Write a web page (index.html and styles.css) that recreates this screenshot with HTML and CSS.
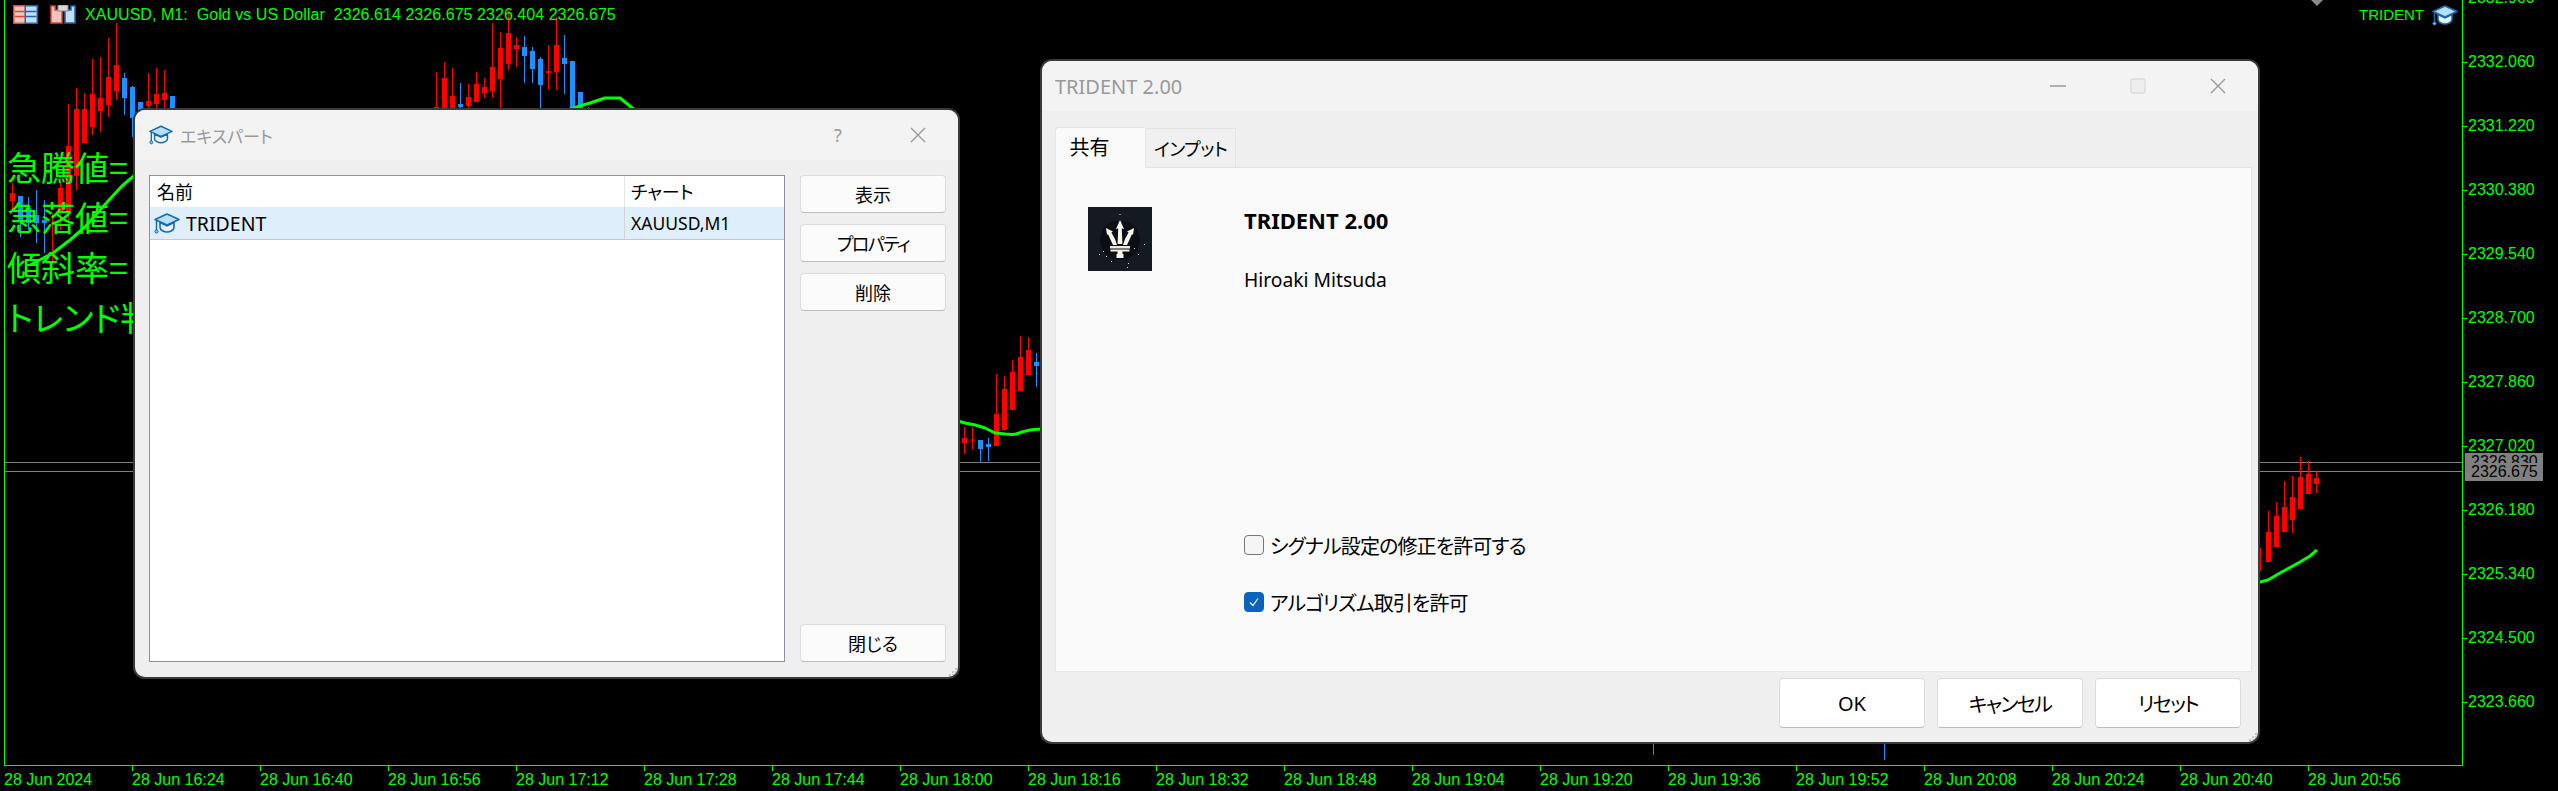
FILE: index.html
```html
<!DOCTYPE html>
<html lang="ja">
<head>
<meta charset="utf-8">
<title>TRIDENT 2.00</title>
<link rel="stylesheet" href="styles.css">
</head>
<body>
<svg class="defs" width="0" height="0" aria-hidden="true">
  <symbol id="cap" viewBox="0 0 26 21">
    <path d="M6 9.5V14.5C6 17 10 19 13 19C16 19 20 17 20 14.5V9.5L13 12.8Z" fill="#e6f3fc" stroke="#1a6aae" stroke-width="1.6"/>
    <path d="M13 1L25 6.5L13 12L1 6.5Z" fill="#b9e0fa" stroke="#1a6aae" stroke-width="1.6" stroke-linejoin="round"/>
    <path d="M2.5 7V17" stroke="#1a6aae" stroke-width="1.5" fill="none"/>
    <circle cx="2.5" cy="18.5" r="1.6" fill="#8cc6ee" stroke="#1a6aae"/>
  </symbol>
  <symbol id="grip" viewBox="0 0 10 10">
    <path d="M7 1h2v2H7zM4 4h2v2H4zM7 4h2v2H7zM1 7h2v2H1zM4 7h2v2H4zM7 7h2v2H7z" fill="#c4c4c4"/>
  </symbol>
</svg>

<main class="chart">
  <section class="plot">
    <svg class="candles" viewBox="0 0 2457 765" width="2457" height="765" aria-hidden="true">
      <g transform="translate(-5 0)">
        <path class="level" d="M5 462.5H2462M5 471.5H2462"/>
        <path class="wick red" d="M12.5 183V212M52.5 213V267M60.5 177V230M68.5 104V220M76.5 88V190M84.5 93V143M92.5 59V135M100.5 57V132M108.5 38V117M116.5 23V100M148.5 73V110M156.5 68V110M164.5 70V110
        M436.5 72V110M444.5 62V110M452.5 68V110M468.5 84V110M476.5 72V102M484.5 78V98M492.5 23V98M500.5 32V110M508.5 8V70M516.5 37V67M548.5 45V90M556.5 17V90
        M964.5 427V454M972.5 427V449M996.5 374V446M1004.5 376V430M1012.5 360V410M1020.5 336V391M1028.5 337V375
        M2260.5 548V571M2268.5 511V562M2276.5 502V547M2284.5 481V532M2292.5 476V533M2300.5 457V509M2308.5 461V494M2316.5 471V493"/>
        <path class="wick blue" d="M20.5 196V237M28.5 197V230M36.5 190V243M44.5 200V253M124.5 73V115M132.5 86V137
        M460.5 83V110M524.5 36V83M532.5 47V83M540.5 57V110M564.5 35V94M588.5 107V110
        M980.5 440V462M988.5 438V461M1036.5 353V387M1653.5 743V755M1884.5 743V760"/>
        <path class="body red" d="M12.5 193V201M60.5 188V213M68.5 146V213M76.5 109V176M84.5 109V143M92.5 94V127M100.5 98V111M108.5 77V105M116.5 65V91M148.5 101V106M156.5 94V104M164.5 93V100
        M436.5 107V110M444.5 78V110M452.5 96V110M468.5 97V106M476.5 84V102M484.5 87V93M492.5 67V91M500.5 48V79M508.5 33V64M516.5 45V49M548.5 71V73M556.5 45V72
        M964.5 438V443M972.5 439.5V440.5M996.5 414V446M1004.5 389V430M1012.5 372V410M1020.5 357V391M1028.5 350V375
        M2268.5 532V562M2276.5 516V547M2284.5 507V532M2292.5 497V520M2300.5 477V509M2308.5 474V494M2316.5 478V484"/>
        <path class="body blue" d="M20.5 196V220M28.5 208V223M36.5 215V223M44.5 220V223M124.5 78V98M132.5 87V118M140.5 102V110M172.5 96V110
        M460.5 104V107M524.5 47V56M532.5 51V69M540.5 59V85M564.5 58V64M572.5 61V110M580.5 92V110
        M980.5 440V449M988.5 444V447M1036.5 362V366"/>
        <path class="ma" d="M30 265L53 253L70 240L85 227L100 210L109 200L122 186L136 174"/>
        <path class="ma" d="M570 109L590 103L605 98L620 98L636 111"/>
        <path class="ma" d="M958 421L965 423L975 425L985 428L995 433L1005 434L1012 434.5L1016 434L1022 432L1030 430L1041 429"/>
        <path class="ma" d="M2258 582.5L2268 580L2280 573L2300 562L2310 556L2317 550"/>
        <path class="marker" d="M2311 0H2323L2317 6Z"/>
      </g>
    </svg>

    <header class="symbol-bar">
      <svg class="tool-icon" viewBox="0 0 25 19" width="25" height="19" aria-hidden="true">
        <rect x=".75" y=".75" width="12" height="17.5" fill="#f6c4bf" stroke="#e0463c" stroke-width="1.5"/>
        <rect x="12.25" y=".75" width="12" height="17.5" fill="#bfe0f8" stroke="#1a6aae" stroke-width="1.5"/>
        <path d="M2 6.5H12M2 11.5H12" stroke="#e0463c" stroke-width="1.6"/>
        <path d="M13 6.5H23.5M13 11.5H23.5" stroke="#1a6aae" stroke-width="1.6"/>
      </svg>
      <svg class="tool-icon" viewBox="0 0 26 19" width="26" height="19" aria-hidden="true">
        <path d="M1 1H5V5H12V18H1Z" fill="#f6c4bf" stroke="#e0463c" stroke-width="1.5"/>
        <path d="M25 1H21V5H15V18H25Z" fill="#bfe0f8" stroke="#1a6aae" stroke-width="1.5"/>
        <rect x="8" y="0" width="10" height="6" fill="#d8d8d8" stroke="#8a8a8a"/>
      </svg>
      <span class="symbol-text">XAUUSD, M1:&nbsp; Gold vs US Dollar&nbsp; 2326.614 2326.675 2326.404 2326.675</span>
    </header>

    <div class="ea-label">
      <span>TRIDENT</span>
      <svg width="26" height="21" aria-hidden="true"><use href="#cap"/></svg>
    </div>

    <ul class="indicator">
      <li>急騰値=</li>
      <li>急落値=</li>
      <li>傾斜率=</li>
      <li>トレンド判定</li>
    </ul>
  </section>

  <aside class="price-axis">
    <span>2332.900</span><span>2332.060</span><span>2331.220</span><span>2330.380</span>
    <span>2329.540</span><span>2328.700</span><span>2327.860</span><span>2327.020</span>
    <span>2326.180</span><span>2325.340</span><span>2324.500</span><span>2323.660</span>
  </aside>

  <footer class="time-axis">
    <span class="first">28 Jun 2024</span><span>28 Jun 16:24</span><span>28 Jun 16:40</span><span>28 Jun 16:56</span>
    <span>28 Jun 17:12</span><span>28 Jun 17:28</span><span>28 Jun 17:44</span><span>28 Jun 18:00</span>
    <span>28 Jun 18:16</span><span>28 Jun 18:32</span><span>28 Jun 18:48</span><span>28 Jun 19:04</span>
    <span>28 Jun 19:20</span><span>28 Jun 19:36</span><span>28 Jun 19:52</span><span>28 Jun 20:08</span>
    <span>28 Jun 20:24</span><span>28 Jun 20:40</span><span>28 Jun 20:56</span>
  </footer>

  <div class="price-tag">
    <span class="tag-back">2326.830</span>
    <span class="tag-front">2326.675</span>
  </div>
</main>

<section class="window experts">
  <div class="titlebar">
    <svg class="title-icon" width="24" height="20" aria-hidden="true"><use href="#cap"/></svg>
    <span class="title-text jp">エキスパート</span>
    <span class="ctl help">?</span>
    <span class="ctl"><svg width="16" height="16" viewBox="0 0 16 16" aria-hidden="true"><path class="ctl-stroke" d="M1 1L15 15M15 1L1 15"/></svg></span>
  </div>
  <div class="experts-body">
    <div class="list">
      <div class="list-head">
        <span class="col-name jp">名前</span>
        <span class="col-chart jp">チャート</span>
      </div>
      <div class="list-row">
        <span class="col-name row-name">
          <svg width="26" height="21" aria-hidden="true"><use href="#cap"/></svg>
          <span>TRIDENT</span>
        </span>
        <span class="col-chart row-chart">XAUUSD,M1</span>
      </div>
    </div>
    <div class="side-buttons">
      <button class="btn jp">表示</button>
      <button class="btn jp kana">プロパティ</button>
      <button class="btn jp">削除</button>
      <button class="btn jp push">閉じる</button>
    </div>
  </div>
  <svg class="grip" width="10" height="10" aria-hidden="true"><use href="#grip"/></svg>
</section>

<section class="window props">
  <div class="titlebar">
    <span class="title-text props-title">TRIDENT 2.00</span>
    <span class="ctl"><svg width="16" height="16" viewBox="0 0 16 16" aria-hidden="true"><path class="ctl-stroke" d="M0 8H16"/></svg></span>
    <span class="ctl"><svg width="16" height="16" viewBox="0 0 16 16" aria-hidden="true"><rect class="ctl-off" x="1" y="1" width="14" height="14" rx="2"/></svg></span>
    <span class="ctl"><svg width="16" height="16" viewBox="0 0 16 16" aria-hidden="true"><path class="ctl-stroke" d="M1 1L15 15M15 1L1 15"/></svg></span>
  </div>
  <div class="props-body">
    <div class="tabs">
      <span class="tab active jp">共有</span>
      <span class="tab tab-kana jp">インプット</span>
    </div>
    <div class="panel">
      <div class="about">
        <svg class="logo" viewBox="0 0 64 64" width="64" height="64" aria-hidden="true">
          <rect width="64" height="64" fill="#141a22"/>
          <circle cx="32" cy="33" r="20" fill="#0b0e13"/>
          <path fill="#f7f5f0" d="M32 13L36 22L33.8 21.4L34.4 37H29.6L30.2 21.4L28 22Z"/>
          <path fill="#f7f5f0" d="M18 21L25 24.5L23.4 25.6L27 32L29 38H25L22.2 32L20 27L19 28Z"/>
          <path fill="#f7f5f0" d="M46 21L39 24.5L40.6 25.6L37 32L35 38H39L41.8 32L44 27L45 28Z"/>
          <path fill="#efe9df" d="M22 39H42V41.4H22ZM22.5 42.6H41.5V44.4H22.5Z"/>
          <path fill="#f7f5f0" d="M29.5 44H34.5V47H35.5V51H28.5V47H29.5Z"/>
          <path fill="#cfd8dc" d="M31.5 7h1v1h-1zM15 44h1v1h-1zM11 47h1v1h-1zM18 49h1v1h-1zM23 54h1v1h-1zM40 56h1v1h-1zM50 47h1v1h-1zM46 41h1v1h-1zM56 37h1v1h-1zM39 60h1v1h-1z"/>
        </svg>
        <div class="about-text">
          <div class="product">TRIDENT 2.00</div>
          <div class="author">Hiroaki Mitsuda</div>
        </div>
      </div>
      <div class="checks">
        <label class="check jp"><span class="box"></span>シグナル設定の修正を許可する</label>
        <label class="check jp"><span class="box on"><svg width="12" height="12" viewBox="0 0 12 12" aria-hidden="true"><path d="M2 6.5L5 9.5L10 2.5" fill="none" stroke="#fff" stroke-width="1.2"/></svg></span>アルゴリズム取引を許可</label>
      </div>
    </div>
    <div class="footer-buttons">
      <button class="btn big">OK</button>
      <button class="btn big jp kana">キャンセル</button>
      <button class="btn big jp kana">リセット</button>
    </div>
  </div>
  <svg class="grip" width="10" height="10" aria-hidden="true"><use href="#grip"/></svg>
</section>
</body>
</html>
```
FILE: styles.css
```css
* { box-sizing: border-box; }
html, body { margin: 0; height: 100%; }
body {
  background: #000;
  overflow: hidden;
  font-family: "Noto Sans", "Noto Sans CJK JP", sans-serif;
  position: relative;
}
.defs { position: absolute; }
ul { list-style: none; margin: 0; padding: 0; }

/* chart */
.chart {
  display: grid;
  grid-template-columns: 2463px 1fr;
  grid-template-rows: 766px 1fr;
  height: 791px;
  overflow: hidden;
  position: relative;
  color: #0f0;
  font-family: "Liberation Sans", sans-serif;
  font-size: 16px;
}
.plot {
  position: relative;
  border-left: 1px solid #0f0;
  border-right: 1px solid #0f0;
  border-bottom: 1px solid #0f0;
  margin-left: 4px;
  overflow: hidden;
}
.candles { position: absolute; left: 0; top: 0; }
.wick, .body, .ma, .level { fill: none; }
.wick { stroke-width: 1; }
.body { stroke-width: 5; }
.red { stroke: #f00; }
.blue { stroke: #1e90ff; }
.ma { stroke: #0f0; stroke-width: 3; stroke-linejoin: round; }
.level { stroke: #808080; }
.marker { fill: #8a8a8a; }

.symbol-bar {
  position: absolute;
  left: 8px;
  top: 5px;
  display: flex;
  align-items: flex-start;
  gap: 12px;
}
.tool-icon { flex: none; }
.symbol-text { margin-left: -3px; line-height: 20px; white-space: nowrap; font-size: 16px; letter-spacing: .05px; }
.ea-label {
  position: absolute;
  right: 4px;
  top: 5px;
  display: flex;
  align-items: flex-start;
  gap: 8px;
  font-size: 15px;
  line-height: 20px;
}
.indicator {
  position: absolute;
  left: 2px;
  top: 142px;
  font-family: "Noto Sans CJK JP", sans-serif;
  font-feature-settings: "palt";
  font-size: 34px;
  line-height: 50px;
  white-space: nowrap;
}

.price-axis {
  margin-top: -34px;
  display: flex;
  flex-direction: column;
}
.price-axis span {
  height: 64px;
  flex: none;
  display: flex;
  align-items: center;
  gap: 1px;
  line-height: 1;
}
.price-axis span::before {
  content: "";
  width: 4px;
  height: 1px;
  background: #0f0;
}
.time-axis {
  grid-column: 1 / 3;
  display: flex;
  padding-left: 4px;
}
.time-axis span { width: 128px; flex: none; line-height: 18px; white-space: nowrap; }
.time-axis span::before {
  content: "";
  display: block;
  width: 1px;
  height: 5px;
  background: #0f0;
}
.time-axis .first::before { background: transparent; }
.price-tag {
  position: absolute;
  left: 2465px;
  top: 453px;
  width: 78px;
  height: 28px;
  background: #808080;
  color: #000;
  padding-left: 6px;
  display: flex;
  flex-direction: column;
}
.tag-back { height: 10px; flex: none; overflow: hidden; line-height: 18px; }
.tag-front { line-height: 18px; }

/* windows */
.window {
  position: absolute;
  background: #efefef;
  border-radius: 10px;
  box-shadow: 0 0 0 2px #3a3a3a;
  color: #000;
  display: flex;
  flex-direction: column;
  overflow: hidden;
}
.experts { left: 135px; top: 110px; width: 823px; height: 567px; }
.props { left: 1042px; top: 61px; width: 1216px; height: 681px; }
.titlebar {
  height: 50px;
  flex: none;
  display: flex;
  align-items: center;
  background: #f3f3f3;
  padding-left: 14px;
  color: #999;
}
.props .titlebar { padding-left: 13px; }
.title-icon { margin-right: 7px; flex: none; }
.title-text { flex: 1; }
.experts .title-text { font-size: 17px; }
.props-title { font-size: 20px; }
.ctl {
  width: 80px;
  flex: none;
  display: flex;
  justify-content: center;
  align-items: center;
  font-size: 18px;
}
.ctl-stroke { stroke: #9a9a9a; stroke-width: 1.4; fill: none; }
.ctl-off { stroke: #dcdcdc; stroke-width: 1.5; fill: #eee; }
.jp { font-feature-settings: "palt"; font-family: "Noto Sans CJK JP", sans-serif; }
.grip { position: absolute; right: 0; bottom: 0; }

.experts-body {
  flex: 1;
  display: flex;
  gap: 15px;
  padding: 15px 12px 15px 14px;
  font-size: 18px;
}
.list {
  width: 636px;
  background: #fff;
  border: 1px solid #8f8f9d;
}
.list-head, .list-row { display: flex; }
.list-head { height: 31px; align-items: stretch; line-height: 31px; }
.list-row {
  height: 33px;
  background: #deeefb;
  border-bottom: 1px solid #c8c8c8;
  align-items: stretch;
}
.col-name { width: 474px; padding-left: 7px; flex: none; }
.col-chart { flex: 1; padding-left: 6px; border-left: 1px solid #d4d4d4; }
.list-head .col-chart { border-left-color: #e6e6e6; }
.list-head .col-name, .list-head .col-chart { white-space: nowrap; }
.row-name { display: flex; align-items: center; gap: 6px; padding-left: 4px; font-size: 19.5px; }
.row-chart { font-size: 17.5px; line-height: 32px; }
.side-buttons {
  width: 146px;
  display: flex;
  flex-direction: column;
  gap: 11px;
}
.btn {
  height: 38px;
  padding: 0;
  background: #fbfbfb;
  border: 1px solid #dcdcdc;
  border-bottom-color: #bcbcbc;
  border-radius: 4px;
  color: #000;
  font-size: 18px;
  font-family: inherit;
}
.btn.jp { font-family: "Noto Sans CJK JP", sans-serif; }
.btn.kana { letter-spacing: -1.6px; }
.push { margin-top: auto; }

.props-body {
  flex: 1;
  display: flex;
  flex-direction: column;
  padding: 16px 6px 0 13px;
  min-height: 0;
}
.tabs { display: flex; height: 40px; flex: none; align-items: flex-end; position: relative; z-index: 1; }
.tab {
  height: 39px;
  width: 91px;
  background: #f0f0f0;
  border: 1px solid #e5e5e5;
  border-bottom: 0;
  font-size: 20px;
  line-height: 38px;
  text-align: center;
}
.tab-kana { font-size: 18px; letter-spacing: -.5px; }
.tab.active {
  height: 41px;
  width: 90px;
  margin-bottom: -1px;
  background: #fafafa;
  border-right: 0;
  border-top-left-radius: 3px;
  padding-right: 22px;
}
.panel {
  height: 505px;
  flex: none;
  background: #fafafa;
  border: 1px solid #e5e5e5;
  display: flex;
  flex-direction: column;
  justify-content: space-between;
  padding: 39px 0 59px 32px;
}
.about { display: flex; gap: 92px; }
.logo { flex: none; }
.product { font-weight: 700; font-size: 22px; line-height: 26px; }
.author { font-size: 19.3px; line-height: 26px; margin-top: 34px; }
.checks { display: flex; flex-direction: column; gap: 37px; margin-left: 156px; }
.check { display: flex; align-items: center; gap: 6px; font-size: 20px; height: 20px; letter-spacing: -.9px; }
.box {
  width: 20px;
  height: 20px;
  flex: none;
  background: #f5f5f5;
  border: 1px solid #777;
  border-radius: 4px;
  display: flex;
  align-items: center;
  justify-content: center;
}
.box.on { background: #0a63bd; border-color: #0a63bd; }
.footer-buttons {
  flex: 1;
  display: flex;
  justify-content: flex-end;
  gap: 12px;
  padding: 6px 11px 0 0;
}
.btn.big { width: 146px; height: 50px; background: #fff; font-size: 20px; }
```
